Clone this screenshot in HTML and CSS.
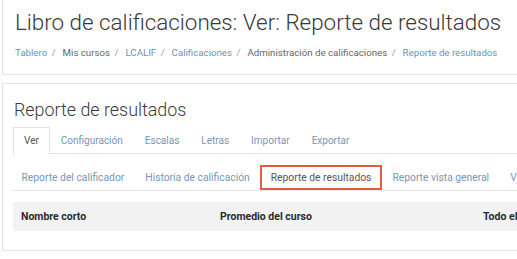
FILE: index.html
```html
<!DOCTYPE html>
<html lang="es">
<head>
<meta charset="utf-8">
<title>Libro de calificaciones</title>
<link rel="stylesheet" href="styles.css">
</head>
<body>
<div class="page">
  <header class="card head-card">
    <h1 class="page-title">Libro de calificaciones: Ver: Reporte de resultados</h1>
    <nav class="crumbs">
      <a class="link" href="#">Tablero</a><span class="sep">/</span>
      <span class="plain">Mis cursos</span><span class="sep">/</span>
      <a class="link" href="#">LCALIF</a><span class="sep">/</span>
      <a class="link" href="#">Calificaciones</a><span class="sep">/</span>
      <span class="plain">Administración de calificaciones</span><span class="sep">/</span>
      <a class="link" href="#">Reporte de resultados</a>
    </nav>
  </header>
  <main class="card main-card">
    <h2 class="section-title">Reporte de resultados</h2>
    <ul class="tabs">
      <li class="tab active">Ver</li>
      <li class="tab">Configuración</li>
      <li class="tab">Escalas</li>
      <li class="tab">Letras</li>
      <li class="tab">Importar</li>
      <li class="tab">Exportar</li>
    </ul>
    <ul class="subnav">
      <li class="subitem">Reporte del calificador</li>
      <li class="subitem">Historia de calificación</li>
      <li class="subitem boxed">Reporte de resultados</li>
      <li class="subitem">Reporte vista general</li>
      <li class="subitem">Vista simple</li>
    </ul>
    <div class="table-head">
      <div class="th">Nombre corto</div>
      <div class="th">Promedio del curso</div>
      <div class="th">Todo el sitio</div>
    </div>
  </main>
</div>
</body>
</html>
```
FILE: styles.css
```css
html, body {
  margin: 0;
  padding: 0;
  background: #ffffff;
  overflow: hidden;
}
body {
  font-family: Roboto, "Liberation Sans", sans-serif;
  color: #333333;
}
.page {
  width: 580px;
  padding-left: 2px;
}
.card {
  border: 1px solid #e2e2e2;
  background: #ffffff;
}
.head-card {
  border-top: none;
  height: 75px;
  box-sizing: border-box;
  padding: 8px 12px 0 12px;
}
.page-title {
  margin: 0;
  font-size: 22.4px;
  font-weight: 300;
  color: #383838;
  line-height: 29px;
  white-space: nowrap;
}
.crumbs {
  margin-top: 10px;
  font-size: 9.7px;
  white-space: nowrap;
  color: #6a6a6a;
}
.link {
  color: #6e92b8;
  text-decoration: none;
}
.plain {
  color: #666666;
}
.sep {
  color: #9a9a9a;
  margin: 0 4.5px;
}
.main-card {
  margin-top: 8px;
  height: 168px;
  box-sizing: border-box;
  padding: 13px 0 0 10px;
}
.section-title {
  margin: 0 0 0 1px;
  font-size: 17.9px;
  font-weight: 300;
  color: #3a3a3a;
  line-height: 26px;
}
.tabs {
  list-style: none;
  margin: 4px 0 0 0;
  padding: 0;
  display: flex;
  border-bottom: 1px solid #e2e2e2;
}
.tab {
  padding: 0 10px;
  height: 25px;
  line-height: 25px;
  font-size: 10px;
  color: #7896b6;
  border: 1px solid transparent;
  border-bottom: none;
  margin-bottom: -1px;
}
.tab.active {
  color: #555555;
  border-color: #e2e2e2;
  background: #ffffff;
  height: 26px;
}
.subnav {
  list-style: none;
  margin: 0 0 0 -2px;
  padding: 11px 0 0 0;
  display: flex;
  border-bottom: 1px solid #e8e8e8;
  white-space: nowrap;
}
.subitem {
  padding: 0 10.5px;
  height: 25px;
  line-height: 25px;
  font-size: 10.3px;
  color: #7896b6;
}
.subitem.boxed {
  color: #555555;
  outline: 2.5px solid #e35d3b;
  outline-offset: -2px;
}
.table-head {
  margin-top: 11px;
  background: #f2f2f2;
  height: 29px;
  display: grid;
  grid-template-columns: 199px 263px auto;
  align-items: center;
  font-size: 10.5px;
  font-weight: 700;
  color: #2a2a2a;
  white-space: nowrap;
}
.th {
  padding-left: 8px;
}
```
